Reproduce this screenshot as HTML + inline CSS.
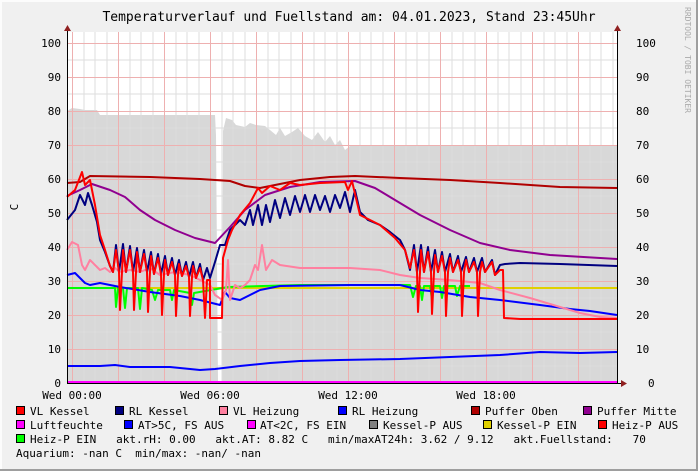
<!DOCTYPE html>
<html><head><meta charset="utf-8"><style>
html,body{margin:0;padding:0;background:#f0f0f0}
svg{display:block}
text{font-family:"DejaVu Sans Mono","Liberation Mono",monospace;fill:#000}
</style></head><body>
<svg width="698" height="471" viewBox="0 0 698 471" xmlns="http://www.w3.org/2000/svg">
<rect x="0" y="0" width="698" height="471" fill="#f0f0f0"/>
<rect x="0" y="0" width="698" height="2" fill="#fcfcfc"/><rect x="0" y="0" width="2" height="471" fill="#fcfcfc"/>
<rect x="0" y="469" width="698" height="2" fill="#9e9e9e"/><rect x="696" y="0" width="2" height="471" fill="#9e9e9e"/>
<text x="349" y="21" font-size="13" text-anchor="middle">Temperaturverlauf und Fuellstand am: 04.01.2023, Stand 23:45Uhr</text>
<text x="0" y="0" font-size="8" transform="translate(685,7) rotate(90)" style="fill:#aaa">RRDTOOL / TOBI OETIKER</text>
<text x="0" y="0" font-size="11" transform="translate(18,207) rotate(-90)" text-anchor="middle">C</text>
<rect x="67" y="32" width="550" height="351" fill="#fff"/>
<path fill="#d8d8d8" d="M67,383 L67,111 L72,108 L80,109 L85,110 L97,110 L100,115 L215,115 L216,135 L218,383 L222,383 L223,131 L226,118 L232,120 L236,125 L245,127 L250,123 L256,125 L265,126 L270,130 L276,135 L280,128 L285,136 L292,132 L298,128 L305,136 L312,140 L318,132 L325,142 L330,136 L335,145 L340,140 L345,150 L350,146 L360,145 L617,145 L617,383 Z"/>
<g stroke="#ddd" stroke-width="1">
<path d="M84,32V383M95,32V383M107,32V383M130,32V383M141,32V383M153,32V383M176,32V383M187,32V383M199,32V383M222,32V383M233,32V383M245,32V383M268,32V383M279,32V383M291,32V383M314,32V383M325,32V383M337,32V383M360,32V383M371,32V383M383,32V383M406,32V383M417,32V383M429,32V383M452,32V383M463,32V383M475,32V383M498,32V383M509,32V383M521,32V383M544,32V383M555,32V383M567,32V383M590,32V383M601,32V383M613,32V383"/>
<path d="M67,366H617M67,332H617M67,298H617M67,264H617M67,230H617M67,196H617M67,162H617M67,128H617M67,94H617M67,60H617"/>
</g>
<g stroke="#eeb0b0" stroke-width="1">
<path d="M72.5,32V383M118.5,32V383M164.5,32V383M210.5,32V383M256.5,32V383M302.5,32V383M348.5,32V383M394.5,32V383M440.5,32V383M486.5,32V383M532.5,32V383M578.5,32V383"/>
<path d="M67,349.5H617M67,315.5H617M67,281.5H617M67,247.5H617M67,213.5H617M67,179.5H617M67,145.5H617M67,111.5H617M67,77.5H617M67,43.5H617"/>
</g>
<g fill="none" stroke-width="2" stroke-linejoin="round">
<path stroke="#0000ff" d="M67,366 L100,366 L115,365 L130,367 L170,367 L200,370 L215,369 L240,366 L270,363 L300,361 L340,360 L400,359 L450,357 L500,355 L540,352 L580,353 L617,352"/>
<path stroke="#ff00ff" d="M67,382 L617,382"/>
<path stroke="#e0d000" d="M67,288 L617,288"/>
<path stroke="#00ff00" d="M67,288 L115,288 L116,307 L118,288 L123,288 L125,308 L127,288 L138,288 L140,309 L142,288 L152,290 L155,300 L158,290 L170,290 L172,300 L174,290 L190,293 L192,305 L194,293 L228,287 L300,285 L410,285 L413,297 L416,286 L420,286 L422,300 L424,286 L430,286 L432,300 L434,286 L440,286 L442,298 L444,286 L455,286 L457,296 L460,286 L470,286"/>
<path stroke="#0000ff" d="M67,275 L75,273 L80,278 L85,283 L90,285 L100,283 L120,287 L150,292 L180,296 L200,300 L220,305 L225,292 L230,298 L240,300 L260,290 L280,286 L350,285 L400,285 L420,290 L440,292 L470,297 L500,300 L540,305 L570,309 L590,311 L617,315"/>
<path stroke="#ff80a0" d="M67,250 L72,242 L78,245 L82,265 L85,270 L90,260 L95,265 L100,270 L105,268 L110,272 L115,268 L120,272 L130,270 L140,272 L150,268 L160,275 L175,272 L190,275 L200,280 L210,285 L215,295 L218,297 L222,300 L226,290 L228,260 L230,300 L235,285 L240,288 L245,285 L250,280 L255,265 L258,270 L262,245 L266,270 L272,260 L280,265 L300,268 L350,268 L380,270 L400,275 L420,278 L450,280 L480,283 L500,290 L530,298 L560,307 L580,313 L600,317 L617,318"/>
<path stroke="#b00000" d="M67,183 L80,182 L90,176 L150,177 L200,179 L230,181 L245,186 L260,188 L280,184 L300,180 L330,177 L355,176 L400,178 L450,180 L500,183 L560,187 L617,188"/>
<path stroke="#900090" d="M67,196 L80,190 L92,184 L110,190 L125,197 L140,210 L155,220 L175,230 L195,238 L215,243 L230,227 L245,210 L265,195 L290,187 L320,182 L355,181 L375,188 L395,200 L420,215 L450,230 L480,243 L510,250 L550,255 L617,259"/>
<path stroke="#000080" d="M67,220 L75,210 L80,195 L85,205 L88,193 L92,205 L97,222 L100,240 L105,252 L110,266 L113,272 L116,245 L119,272 L123,244 L126,272 L130,246 L133,272 L137,248 L140,272 L144,250 L147,272 L151,252 L154,274 L158,254 L161,274 L165,256 L168,275 L172,258 L175,275 L179,260 L182,276 L186,262 L189,277 L193,262 L196,278 L200,264 L203,280 L207,268 L210,278 L215,262 L220,245 L225,245 L230,230 L240,220 L245,225 L250,210 L253,225 L258,205 L262,225 L266,205 L270,222 L275,200 L280,218 L285,198 L290,215 L295,196 L300,212 L305,195 L310,212 L315,195 L320,210 L325,196 L330,212 L335,195 L340,208 L345,192 L350,212 L355,190 L360,212 L368,220 L380,225 L390,232 L400,240 L405,250 L410,270 L414,245 L417,272 L421,245 L424,272 L428,247 L431,272 L435,250 L438,272 L442,252 L445,272 L450,254 L453,272 L458,256 L461,272 L466,257 L469,272 L474,258 L477,272 L482,258 L485,272 L492,260 L495,275 L500,265 L505,264 L520,263 L560,264 L617,266"/>
<path stroke="#ff0000" d="M67,197 L75,190 L82,172 L85,185 L90,180 L95,205 L100,235 L105,250 L110,266 L113,272 L116,250 L119,272 L120,310 L122,272 L123,250 L126,272 L130,250 L133,272 L134,310 L136,272 L137,252 L140,272 L144,254 L147,272 L148,312 L150,272 L151,256 L154,274 L158,258 L161,274 L162,315 L164,274 L165,260 L168,275 L172,262 L175,275 L176,316 L178,275 L179,264 L182,276 L186,266 L189,277 L190,316 L192,277 L193,266 L196,278 L200,268 L203,280 L205,318 L207,280 L210,280 L210,318 L222,318 L223,258 L228,240 L232,230 L240,215 L250,203 L258,188 L262,193 L270,186 L280,190 L290,183 L300,185 L320,183 L345,182 L348,190 L352,181 L360,215 L370,220 L380,225 L395,238 L405,250 L410,268 L414,250 L417,272 L418,312 L420,272 L421,250 L424,272 L428,252 L431,272 L432,314 L434,272 L435,255 L438,272 L442,256 L445,272 L446,316 L448,272 L450,258 L453,272 L458,260 L461,272 L462,316 L464,272 L466,260 L469,272 L474,262 L477,272 L478,316 L480,272 L482,262 L485,272 L492,262 L495,275 L500,270 L503,270 L504,318 L520,319 L617,319"/>
</g>
<path stroke="#000" stroke-width="1" d="M67.5,28V383.5M617.5,28V383.5M67,383.5H622"/>
<path fill="#902020" d="M64,31 L67.5,25 L71,31 Z M614,31 L617.5,25 L621,31 Z M621,380 L627,383.5 L621,387 Z"/>
<g font-size="11" text-anchor="end">
<text x="61" y="47">100</text><text x="61" y="81">90</text><text x="61" y="115">80</text><text x="61" y="149">70</text><text x="61" y="183">60</text><text x="61" y="217">50</text><text x="61" y="251">40</text><text x="61" y="285">30</text><text x="61" y="319">20</text><text x="61" y="353">10</text><text x="61" y="387">0</text>
</g>
<g font-size="11">
<text x="636" y="47">100</text><text x="636" y="81">90</text><text x="636" y="115">80</text><text x="636" y="149">70</text><text x="636" y="183">60</text><text x="636" y="217">50</text><text x="636" y="251">40</text><text x="636" y="285">30</text><text x="636" y="319">20</text><text x="636" y="353">10</text><text x="648" y="387">0</text>
</g>
<g font-size="11" text-anchor="middle">
<text x="72" y="399">Wed 00:00</text><text x="210" y="399">Wed 06:00</text><text x="348" y="399">Wed 12:00</text><text x="486" y="399">Wed 18:00</text>
</g>
<g stroke="#000" stroke-width="1">
<rect x="16.5" y="406.5" width="8" height="8" fill="#ff0000"/>
<rect x="115.5" y="406.5" width="8" height="8" fill="#000080"/>
<rect x="219.5" y="406.5" width="8" height="8" fill="#ff80a0"/>
<rect x="338.5" y="406.5" width="8" height="8" fill="#0000ff"/>
<rect x="471.5" y="406.5" width="8" height="8" fill="#b00000"/>
<rect x="583.5" y="406.5" width="8" height="8" fill="#900090"/>
<rect x="16.5" y="420.5" width="8" height="8" fill="#ff00ff"/>
<rect x="124.5" y="420.5" width="8" height="8" fill="#0000ff"/>
<rect x="247.5" y="420.5" width="8" height="8" fill="#ff00ff"/>
<rect x="369.5" y="420.5" width="8" height="8" fill="#808080"/>
<rect x="483.5" y="420.5" width="8" height="8" fill="#e0d000"/>
<rect x="598.5" y="420.5" width="8" height="8" fill="#ff0000"/>
<rect x="16.5" y="434.5" width="8" height="8" fill="#00ff00"/>
</g>
<g font-size="11">
<text x="30" y="415">VL Kessel</text>
<text x="129" y="415">RL Kessel</text>
<text x="233" y="415">VL Heizung</text>
<text x="352" y="415">RL Heizung</text>
<text x="485" y="415">Puffer Oben</text>
<text x="597" y="415">Puffer Mitte</text>
<text x="30" y="429">Luftfeuchte</text>
<text x="138" y="429">AT&gt;5C, FS AUS</text>
<text x="260" y="429">AT&lt;2C, FS EIN</text>
<text x="383" y="429">Kessel-P AUS</text>
<text x="497" y="429">Kessel-P EIN</text>
<text x="612" y="429">Heiz-P AUS</text>
<text x="30" y="443" xml:space="preserve">Heiz-P EIN   akt.rH: 0.00   akt.AT: 8.82 C   min/maxAT24h: 3.62 / 9.12   akt.Fuellstand:   70</text>
<text x="16" y="457" xml:space="preserve">Aquarium: -nan C  min/max: -nan/ -nan</text>
</g>
</svg>
</body></html>
